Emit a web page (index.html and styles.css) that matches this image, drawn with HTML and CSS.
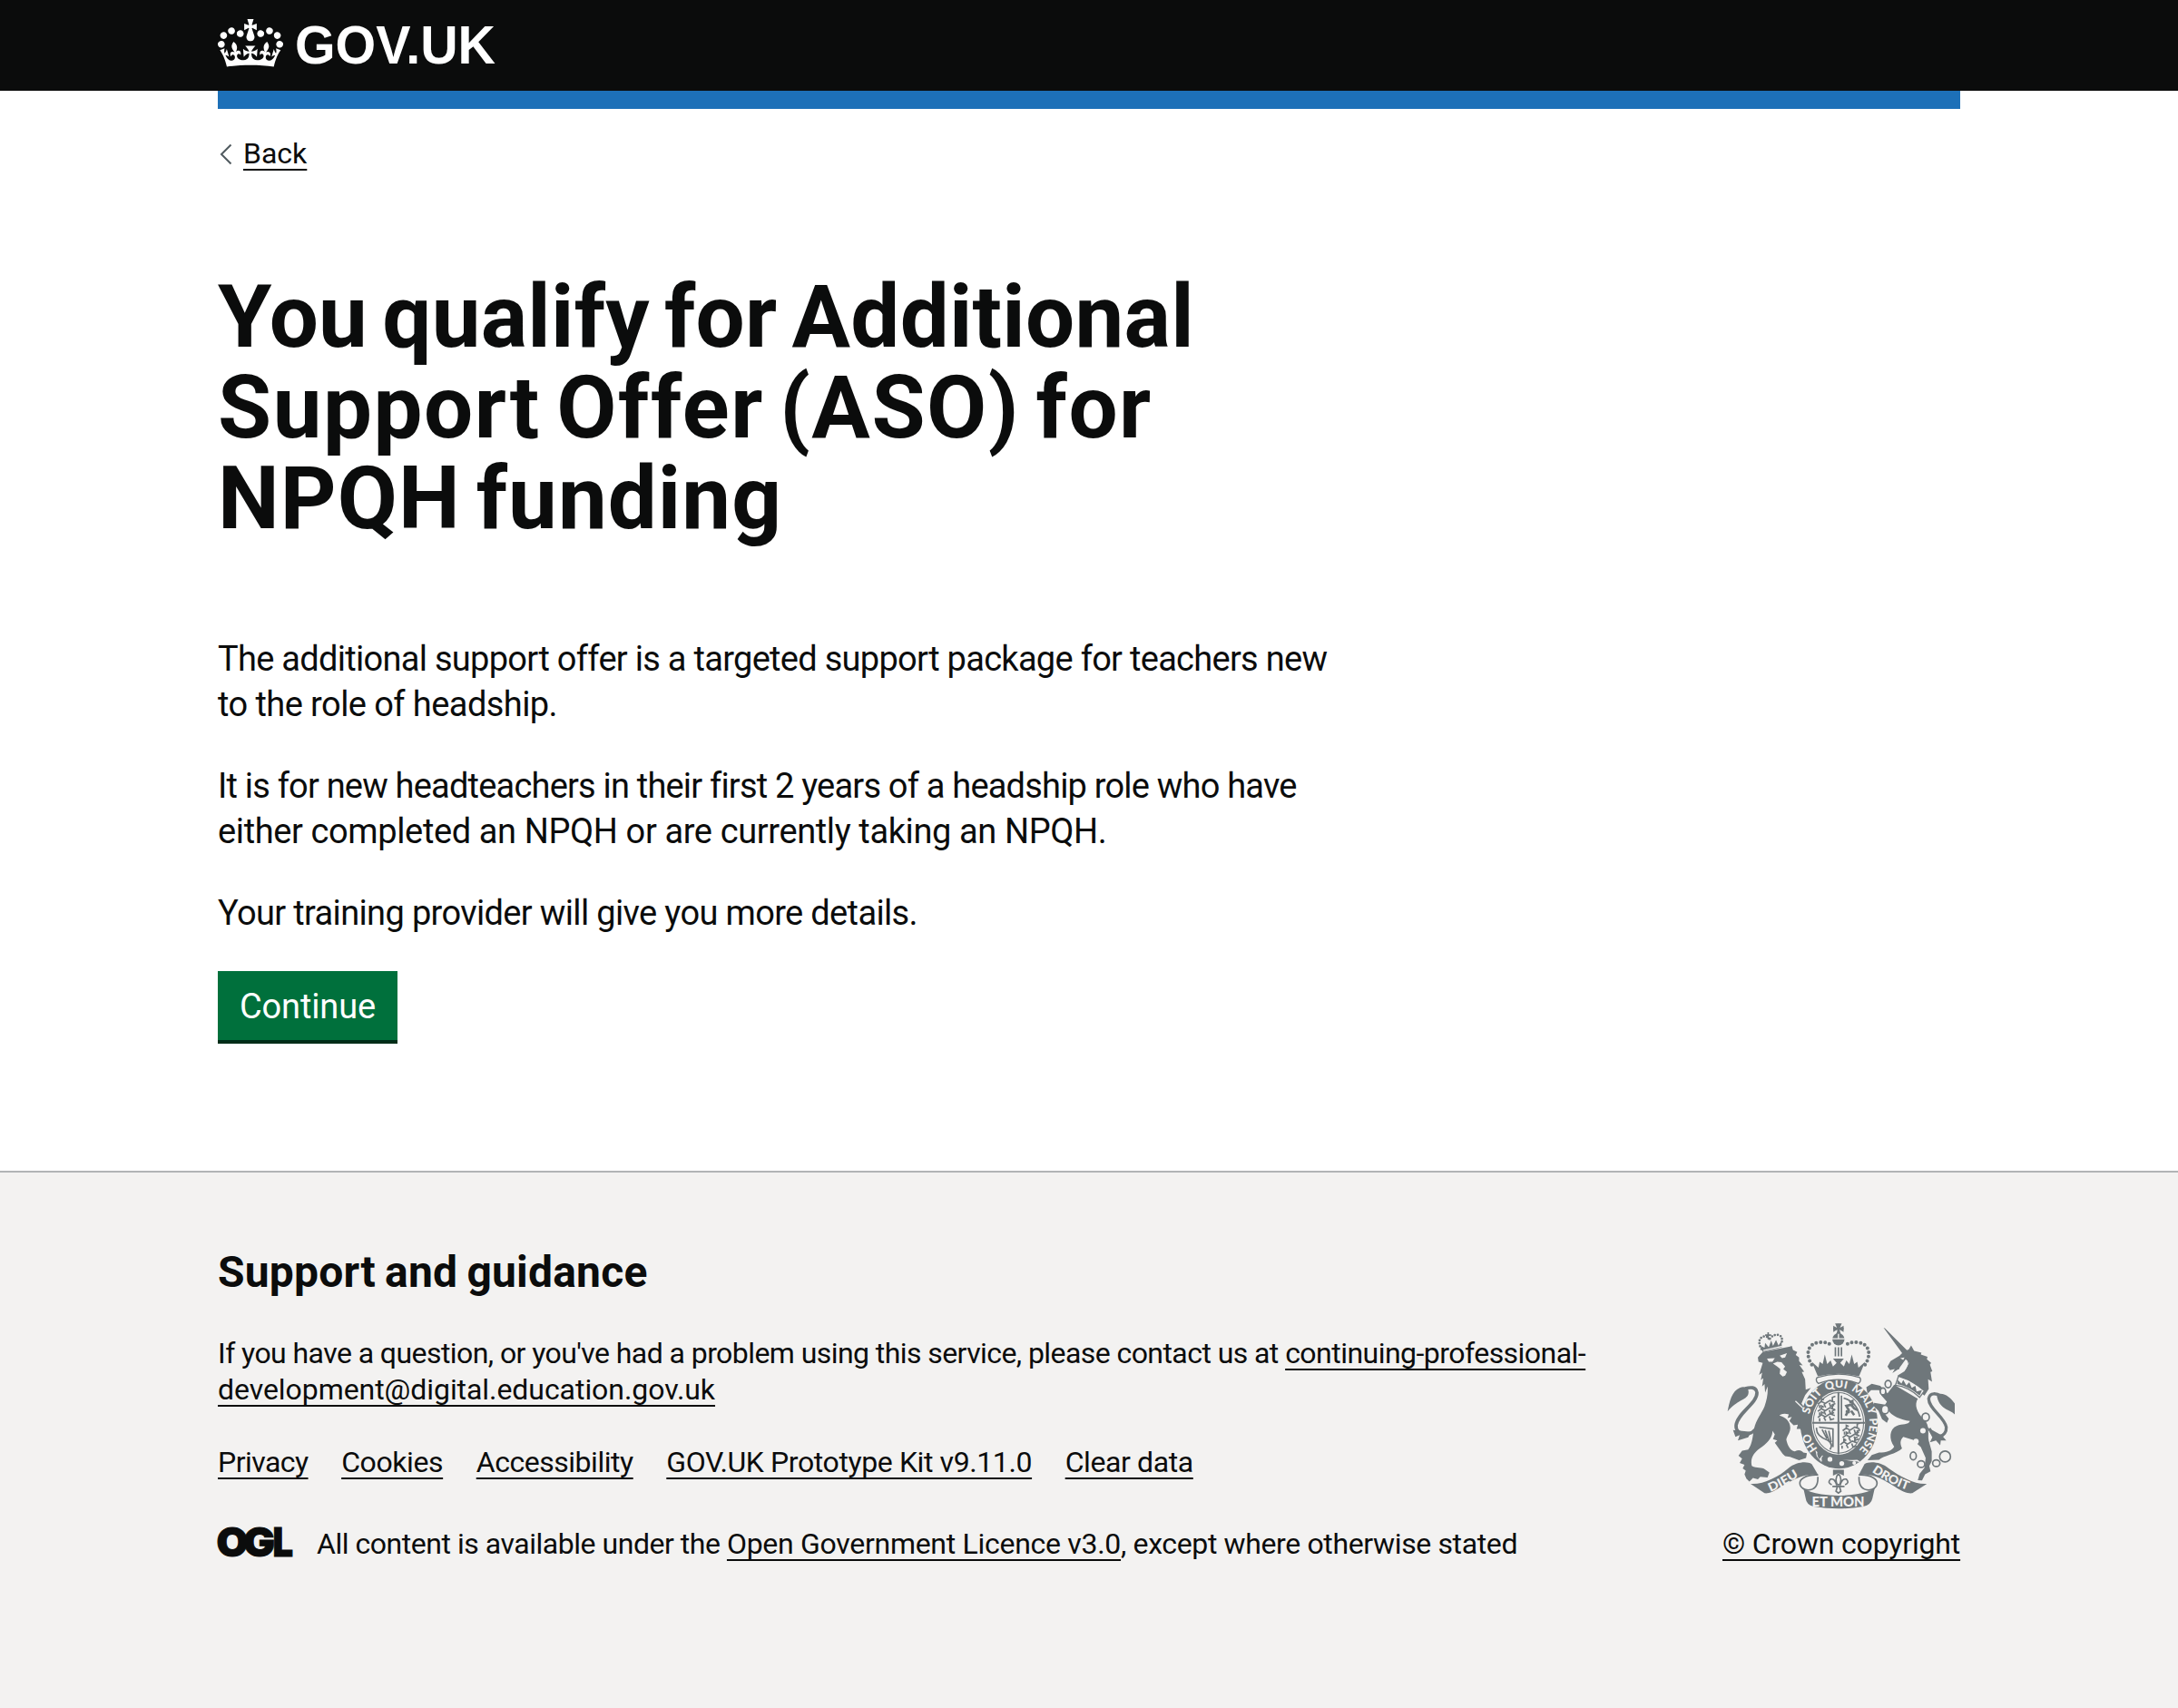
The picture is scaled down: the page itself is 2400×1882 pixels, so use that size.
FILE: index.html
```
<!DOCTYPE html>
<html lang="en">
<head>
<meta charset="utf-8">
<title>You qualify for Additional Support Offer (ASO) for NPQH funding</title>
<link rel="stylesheet" href="styles.css">
</head>
<body>
<header class="header">
  <div class="container header-inner">
    <svg class="crown" viewBox="0 0 132 97" aria-hidden="true"><path d="M25 30.2c3.5 1.5 7.7-.2 9.1-3.7 1.5-3.6-.2-7.8-3.9-9.2-3.6-1.4-7.6.3-9.1 3.9-1.4 3.5.3 7.5 3.9 9zM9 39.5c3.6 1.5 7.8-.2 9.2-3.7 1.5-3.6-.2-7.8-3.9-9.1-3.6-1.5-7.6.2-9.1 3.8-1.4 3.5.3 7.5 3.8 9zM4.4 57.2c3.5 1.5 7.7-.2 9.1-3.8 1.5-3.6-.2-7.7-3.9-9.1-3.5-1.5-7.6.3-9.1 3.8-1.4 3.5.3 7.6 3.9 9.1zm38.3-21.4c3.5 1.5 7.7-.2 9.1-3.8 1.5-3.6-.2-7.7-3.9-9.1-3.6-1.5-7.6.3-9.1 3.8-1.3 3.6.4 7.7 3.9 9.1zm64.4-5.6c-3.6 1.5-7.8-.2-9.1-3.7-1.5-3.6.2-7.8 3.8-9.2 3.6-1.4 7.7.3 9.2 3.9 1.3 3.5-.4 7.5-3.9 9zm15.9 9.3c-3.6 1.5-7.7-.2-9.1-3.7-1.5-3.6.2-7.8 3.7-9.1 3.6-1.5 7.7.2 9.2 3.8 1.5 3.5-.3 7.5-3.8 9zm4.7 17.7c-3.6 1.5-7.8-.2-9.2-3.8-1.5-3.6.2-7.7 3.9-9.1 3.6-1.5 7.7.3 9.2 3.8 1.3 3.5-.4 7.6-3.9 9.1zM89.3 35.8c-3.6 1.5-7.8-.2-9.2-3.8-1.4-3.6.2-7.7 3.9-9.1 3.6-1.5 7.7.3 9.2 3.8 1.4 3.6-.3 7.7-3.9 9.1zM69.7 17.7l8.9 4.7V9.3l-8.9 2.8c-.2-.3-.5-.6-.9-.9L72.4 0H59.6l3.5 11.2c-.3.3-.6.5-.9.9l-8.8-2.8v13.1l8.8-4.7c.3.3.6.7.9.9l-5 15.4v.1c-.2.8-.4 1.6-.4 2.4 0 4.1 3.1 7.5 7 8.1h.2c.3 0 .7.1 1 .1.4 0 .7 0 1-.1h.2c4-.6 7.1-4.1 7.1-8.1 0-.8-.1-1.7-.4-2.4V34l-5.1-15.4c.4-.2.7-.6 1-.9zM66 92.8c16.9 0 32.8 1.1 47.1 3.2 4-16.9 8.9-26.7 14-33.5l-9.6-3.4c1 4.9 1.1 7.2 0 10.2-1.5-1.4-3-4.3-4.2-8.7L108.6 76c2.8-2 5-3.2 7.5-3.3-4.4 9.4-10 11.9-13.6 11.2-4.3-.8-6.3-4.6-5.6-7.9 1-4.7 5.7-5.9 8-.5 4.3-8.7-3-11.4-7.6-8.8 7.1-7.2 7.9-13.5 2.1-21.1-8 6.1-8.1 12.3-4.5 20.8-4.7-5.4-12.1-2.5-9.5 6.2 3.4-5.2 7.9-2 7.2 3.1-.6 4.3-6.4 7.8-13.5 7.2-10.3-.9-10.9-8-11.2-13.8 2.5-.5 7.1 1.8 11 7.3L80.2 60c-4.1 4.4-8 5.3-12.3 5.4 1.4-4.4 8-11.6 8-11.6H55.5s6.4 7.2 7.9 11.6c-4.2-.1-8-1-12.3-5.4l1.4 16.4c3.9-5.5 8.5-7.7 10.9-7.3-.3 5.8-.9 12.8-11.1 13.8-7.2.6-12.9-2.9-13.5-7.2-.7-5 3.8-8.3 7.1-3.1 2.7-8.7-4.6-11.6-9.4-6.2 3.7-8.5 3.6-14.7-4.6-20.8-5.8 7.6-5 13.9 2.2 21.1-4.7-2.6-11.9.1-7.7 8.8 2.3-5.5 7.1-4.2 8.1.5.7 3.3-1.3 7.1-5.7 7.9-3.5.7-9-1.8-13.5-11.2 2.5.1 4.7 1.3 7.5 3.3l-4.7-15.4c-1.2 4.4-2.7 7.2-4.3 8.7-1.1-3-.9-5.3 0-10.2l-9.5 3.4c5 6.9 9.9 16.7 14 33.5 14.8-2.1 30.8-3.2 47.7-3.2z"/></svg>
    <svg class="wordmark" viewBox="0 0 222 60"><text x="-1" y="49" textLength="221" lengthAdjust="spacingAndGlyphs">GOV.UK</text></svg>
  </div>
</header>
<div class="container">
  <div class="bar"></div>
  <a class="back" href="#"><svg class="chevron" viewBox="0 0 14 24" aria-hidden="true"><path d="M12.5 1.5 2 12l10.5 10.5"/></svg><span class="u">Back</span></a>
  <main class="main">
    <h1><span class="h-1">You qualify for Additional</span><br><span class="h-2">Support Offer (ASO) for</span><br><span class="h-3">NPQH funding</span></h1>
    <p><span class="p-1">The additional support offer is a targeted support package for teachers new</span><br><span class="p-2">to the role of headship.</span></p>
    <p><span class="p-3">It is for new headteachers in their first 2 years of a headship role who have</span><br><span class="p-4">either completed an NPQH or are currently taking an NPQH.</span></p>
    <p><span class="p-5">Your training provider will give you more details.</span></p>
    <button class="button" type="button">Continue</button>
  </main>
</div>
<footer class="footer">
  <div class="container footer-inner">
    <div class="meta">
      <h2>Support and guidance</h2>
      <p class="contact"><span class="f-1">If you have a question, or you've had a problem using this service, please contact us at </span><a class="u" href="#"><span class="f-2">continuing-professional-</span><br><span class="f-3">development@digital.education.gov.uk</span></a></p>
      <ul class="links">
        <li><a class="u l-1" href="#">Privacy</a></li>
        <li><a class="u l-2" href="#">Cookies</a></li>
        <li><a class="u l-3" href="#">Accessibility</a></li>
        <li><a class="u l-4" href="#">GOV.UK Prototype Kit v9.11.0</a></li>
        <li><a class="u l-5" href="#">Clear data</a></li>
      </ul>
      <div class="licence">
        <svg class="ogl" viewBox="0 0 83 35"><text y="33.2"><tspan x="-1.5" textLength="35" lengthAdjust="spacingAndGlyphs">O</tspan><tspan x="28" textLength="35" lengthAdjust="spacingAndGlyphs">G</tspan><tspan x="60.5" textLength="22.5" lengthAdjust="spacingAndGlyphs">L</tspan></text></svg>
        <span><span class="c-1">All content is available under the </span><a class="u c-2" href="#">Open Government Licence v3.0</a><span class="c-3">, except where otherwise stated</span></span>
      </div>
    </div>
    <a class="copyright" href="#">
      <svg class="arms" viewBox="70 50 755 620" aria-hidden="true">
        <defs>
          <path id="motto" d="M440 500A101 117 0 0 1 440 266A101 117 0 0 1 440 500"/>
          <path id="dieu" d="M213 610Q266 588 320 550"/>
          <path id="droit" d="M548 543Q614 588 680 608"/>
        </defs>
        <!-- lion -->
        <path d="M172 166 188 148 278 130 284 128 288 141 302 148 297 158 308 166 308 178 320 192 309 191 325 213 317 214 328 238 330 272 347 266 328 290 316 318C330 338 345 358 345 382L336 408 328 400 318 412 312 402 300 402 304 388 290 390 276 376 284 362 270 366 274 354C258 348 245 354 243 358C262 362 280 378 279 400C278 418 266 428 266 438C270 456 278 474 294 476C306 470 316 472 322 480L334 482 331 498 308 505 278 494 262 492 254 484 238 462 228 448 236 440 222 436 228 420 220 408C222 430 200 452 178 466C158 480 146 500 152 524C168 534 186 526 196 536L210 546 204 562 180 560 172 568 156 564 144 576 134 566 128 552 132 540 122 532 128 520 112 514 120 500 108 490 120 474 140 470C154 452 154 428 160 400C166 372 184 352 194 328C202 306 206 282 204 262L196 282 194 254 186 262 190 234 182 240 186 216 176 224 188 184 174 180Z"/>
        <path class="line w11" d="M170 396C150 430 98 424 100 390C104 350 170 318 169 282C166 262 146 264 130 269"/>
        <path d="M72 344C78 312 86 276 112 266C132 258 146 270 140 288C134 306 104 306 72 344ZM90 406 98 428 112 422 106 440 140 430 150 412Z"/>
        <path class="paper" d="M202 170 228 168 220 180 208 180ZM244 160 268 152 262 166 252 168ZM222 186 236 180 250 182 262 196 256 204 268 214 262 226 254 229 244 220 246 204 236 196Z"/>
        <path d="M180 127 188 148 251 132 250 112 240 126 232 108 222 128 216 110 208 132 196 118 194 134Z"/>
        <path class="beads" d="M184 138C174 122 172 100 194 96Q208 96 212 112M212 104Q224 88 242 92Q256 98 250 122"/>
        <path class="line w5" d="M206 83V105M196 92H216"/>
        <path class="rule" d="M190 143 252 129M296 310 340 352"/>
        <!-- garter and shield -->
        <ellipse cx="440" cy="385" rx="128" ry="148"/>
        <ellipse class="paper" cx="438" cy="382" rx="88" ry="105"/>
        <ellipse class="line w3" cx="438" cy="382" rx="83" ry="100"/>
        <text class="motto"><textPath href="#motto" startOffset="80">HO</textPath></text>
        <text class="motto"><textPath href="#motto" startOffset="200">SOIT</textPath></text>
        <text class="motto"><textPath href="#motto" startOffset="299">QUI</textPath></text>
        <text class="motto"><textPath href="#motto" startOffset="383">MAL</textPath></text>
        <text class="motto"><textPath href="#motto" startOffset="463">Y</textPath></text>
        <text class="motto"><textPath href="#motto" startOffset="497">PENSE</textPath></text>
        <path class="line w6" d="M438 280V486M352 382H526"/>
        <path class="line w5" d="M448 292V370H514M455 300Q500 312 508 362M374 396 420 402 420 462M366 398Q362 424 404 440Q422 452 410 470M384 404 400 434M394 406 408 444M406 408 414 446"/>
        <g id="lions"><path class="line w5" d="M370 320 382 311 394 318 410 308 426 314M376 323V333M390 320 396 331M408 316 412 328 424 324M382 310V302L390 306M418 312V298L428 294"/></g>
        <use href="#lions" y="24"/><use href="#lions" y="44"/>
        <use href="#lions" x="82" y="88"/><use href="#lions" x="82" y="111"/><use href="#lions" x="74" y="134"/>
        <path class="line w8" d="M462 358 472 340 464 326 480 322 490 334 502 340M480 342 490 356M462 344 476 346M484 324V310L474 314"/>
        <path class="paper" d="M362 472Q396 510 500 504L510 510Q460 524 420 512L380 510 366 492Z"/>
        <path d="M386 474Q366 470 368 486Q370 500 386 514Q376 492 394 488ZM390 482Q420 502 504 510Q466 536 420 528Q374 510 376 500Z"/>
        <circle class="paper" cx="410" cy="502" r="8"/><circle class="paper" cx="449" cy="516" r="8"/><circle class="paper" cx="490" cy="514" r="6"/>
        <!-- royal crown -->
        <path class="line w8" d="M438 55V88M421 71H455"/>
        <path d="M427 54H449L442 70H434ZM421 61V82L438 72ZM455 61V82L438 72ZM430 88H446L440 72Z"/>
        <circle cx="438" cy="106" r="20"/>
        <path class="rule" d="M417 104H459M438 88V104"/>
        <path class="beads big" d="M350 190C330 160 332 120 376 116Q404 114 418 128M526 190C546 160 544 120 500 116Q472 114 458 128"/>
        <path class="line w5" d="M428 132V162M438 132V162M448 132V162"/>
        <path d="M350 180 372 200 376 180 386 188 393 156 401 188 412 176 420 196 432 184 420 170H456L444 184 456 196 464 176 474 188 482 156 490 188 500 180 504 200 526 180 506 228Q438 212 370 228Z"/>
        <path class="paper edge" d="M368 232Q438 210 508 232Q516 242 504 252Q438 226 372 252Q360 242 368 232Z"/>
        <!-- unicorn -->
        <path d="M587 68 592 70 664 142 650 154ZM600 196 610 178 640 160 655 145 670 140 678 126 688 144 712 150 710 156 732 164 730 172 744 184 740 190 748 212 742 214 747 246 734 238 736 270 722 292 700 275 638 237 634 225 656 212 672 182 650 204 634 206 616 218 624 204 608 208Z"/>
        <path class="paper" d="M642 168 656 166 652 174ZM660 172Q676 180 660 206L632 224 640 200Z"/>
        <path d="M622 256 700 302C688 322 696 346 720 370C742 392 732 420 736 440L746 476 746 508 738 524 742 542 724 552 714 572 700 571 706 550 722 530 726 498 710 462 684 438 652 428C640 440 642 452 648 466C632 484 584 490 572 504L534 505 548 488 572 480C596 480 614 474 622 460C604 436 606 402 630 392C650 384 668 390 674 376C644 372 612 358 604 342L590 350 604 368 598 382 582 370 570 342 554 326 556 316 592 322 598 312 580 292 572 274 546 274 534 286 530 264 548 253 576 260 600 284Z"/>
        <path class="paper edge" d="M636 228Q680 240 722 276L706 298Q668 262 626 258Z"/>
        <path d="M634 240 646 252 652 240 662 258 672 248 680 266 692 260 696 278 714 274 706 292Q670 262 632 254Z"/>
        <path class="line w10" d="M738 400C756 442 796 428 794 396C788 362 736 336 736 302C740 280 762 284 778 294"/>
        <path d="M762 288C790 280 808 300 822 318L822 354C806 336 770 340 762 288ZM730 396 748 430 740 446 760 440 774 456 776 440 794 440 780 424Z"/>
        <g class="chain"><ellipse cx="602" cy="254" rx="10" ry="12"/><ellipse cx="585" cy="278" rx="9" ry="11"/><ellipse cx="592" cy="338" rx="12" ry="14"/><ellipse cx="726" cy="363" rx="12" ry="13"/><ellipse cx="685" cy="491" rx="10" ry="13"/><ellipse cx="711" cy="518" rx="12" ry="11"/><ellipse cx="761" cy="515" rx="12" ry="11"/><circle cx="790" cy="493" r="18"/></g>
        <circle class="paper" cx="717" cy="408" r="9"/><circle class="paper" cx="694" cy="443" r="9"/>
        <!-- motto scroll -->
        <path d="M148 583C190 586 240 560 272 532C300 510 334 508 350 518L371 554C334 546 292 566 246 594C224 610 206 616 194 614Z"/>
        <path d="M730 583C690 586 644 560 604 532C576 510 540 508 524 518L505 554C546 546 584 566 626 594C650 610 668 616 682 614Z"/>
        <path class="line w5" d="M371 554C334 552 304 566 312 588Q318 602 338 604Q372 602 370 560M505 554C542 552 572 566 564 588Q558 602 538 604Q504 602 506 560"/>
        <path d="M322 597Q340 612 382 618Q438 626 494 618Q540 612 558 597L550 632Q546 652 520 658Q438 672 356 658Q332 652 330 632Z"/>
        <text class="scroll"><textPath href="#dieu" textLength="108" lengthAdjust="spacingAndGlyphs">DIEU</textPath></text>
        <text class="scroll"><textPath href="#droit" textLength="132" lengthAdjust="spacingAndGlyphs">DROIT</textPath></text>
        <text class="scroll big-text" x="350" y="657" textLength="174" lengthAdjust="spacingAndGlyphs">ET MON</text>
        <!-- fleur-de-lis -->
        <path d="M420 537H456V556L438 548 420 556Z"/>
        <path class="line w5" d="M438 550Q424 564 434 586H442Q452 564 438 550M432 588Q426 564 412 568Q400 580 416 586M444 588Q450 564 464 568Q476 580 460 586M418 592H458M434 594 430 608 438 614 446 608 442 594"/>
      </svg>
      <span class="u cr">© Crown copyright</span>
    </a>
  </div>
</footer>
</body>
</html>
```
FILE: styles.css
```
* { box-sizing: border-box; }
body { margin: 0; font-family: Roboto, "Liberation Sans", sans-serif; color: #0b0c0c; background: #fff; }
h1, h2, p, ul { margin: 0; padding: 0; }
a { color: inherit; text-decoration: none; }
.container { width: 1920px; margin: 0 auto; }
.u { text-decoration: underline; text-decoration-thickness: 2px; text-underline-offset: 6px; text-decoration-skip-ink: none; }

.header { height: 100px; background: #0b0c0c; }
.header-inner { display: flex; padding-top: 21px; gap: 14px; }
.crown { width: 72px; height: 53px; fill: #fff; }
.wordmark { width: 222px; height: 60px; fill: #fff; overflow: visible; font: 700 60px "Liberation Sans", sans-serif; }

.bar { height: 20px; background: #1d70b8; }
.back { display: flex; width: max-content; align-items: center; margin-top: 29px; font-size: 32px; line-height: 40px; }
.chevron { width: 14px; height: 24px; margin: 2px 12px 0 2px; fill: none; stroke: #505a5f; stroke-width: 2; }

.main { padding: 110px 0 144px; }
h1 { margin-bottom: 102px; font-size: 96px; line-height: 100px; word-spacing: -8px; white-space: nowrap; }
.main p { margin-bottom: 40px; font-size: 38px; line-height: 50px; white-space: nowrap; }
.main p:last-of-type { margin-bottom: 39px; }
.h-1 { letter-spacing: .26px; }
.h-2 { letter-spacing: 1.55px; }
.h-3 { letter-spacing: 1.05px; }
.p-1 { letter-spacing: -.71px; }
.p-2 { letter-spacing: -.57px; }
.p-3 { letter-spacing: -.8px; }
.p-4 { letter-spacing: -.38px; }
.p-5 { letter-spacing: -.65px; }
.button { display: block; width: 198px; height: 76px; padding: 2px 0 0; border: 0; background: #00703c; box-shadow: 0 4px 0 #002d18; color: #fff; font: 38px/38px Roboto, sans-serif; letter-spacing: -.14px; }

.footer { height: 592px; padding-top: 85px; border-top: 2px solid #b1b4b6; background: #f3f2f1; font-size: 32px; line-height: 40px; }
.footer-inner { display: flex; justify-content: space-between; align-items: flex-end; }
h2 { margin-bottom: 44px; font-size: 48px; line-height: 50px; letter-spacing: .2px; word-spacing: -2px; }
.contact { margin-bottom: 40px; white-space: nowrap; }
.f-1 { letter-spacing: -.57px; }
.f-2 { letter-spacing: -.53px; }
.f-3 { letter-spacing: -.06px; }
.links { display: flex; gap: 36.6px; margin-bottom: 50px; list-style: none; }
.l-1 { letter-spacing: -.55px; }
.l-2, .l-4, .l-5 { letter-spacing: -.4px; }
.l-3 { letter-spacing: -.47px; }
.licence { display: flex; gap: 26px; white-space: nowrap; }
.ogl { width: 83px; height: 35px; margin-top: 1px; overflow: visible; font: 900 44px Inter, sans-serif; fill: #0b0c0c; stroke: #0b0c0c; stroke-width: 1; }
.c-1 { letter-spacing: -.47px; }
.c-2 { letter-spacing: -.29px; }
.c-3 { letter-spacing: -.37px; }
.copyright { display: flex; flex-direction: column; width: 262px; }
.cr { letter-spacing: -.17px; white-space: nowrap; }

.arms { width: 252px; height: 207px; margin: 0 0 17px 5px; fill: #6f777b; }
.arms .line { fill: none; stroke: #6f777b; }
.w3 { stroke-width: 3; }
.w5 { stroke-width: 5; }
.w6 { stroke-width: 6; }
.w8 { stroke-width: 8; }
.w10 { stroke-width: 10; }
.w11 { stroke-width: 11; }
.arms .paper { fill: #f3f2f1; }
.arms .edge { stroke: #6f777b; stroke-width: 4; }
.arms .rule { fill: none; stroke: #f3f2f1; stroke-width: 4; }
.arms .beads { fill: none; stroke: #6f777b; stroke-width: 8; stroke-linecap: round; stroke-dasharray: 0 10; }
.arms .beads.big { stroke-width: 12; stroke-dasharray: 0 14.5; }
.chain { fill: #f3f2f1; stroke: #6f777b; stroke-width: 5; }
.motto, .scroll { fill: #f3f2f1; font: 900 37px Lato, sans-serif; }
.scroll { font-size: 40px; }
.big-text { font-size: 46px; }
```
